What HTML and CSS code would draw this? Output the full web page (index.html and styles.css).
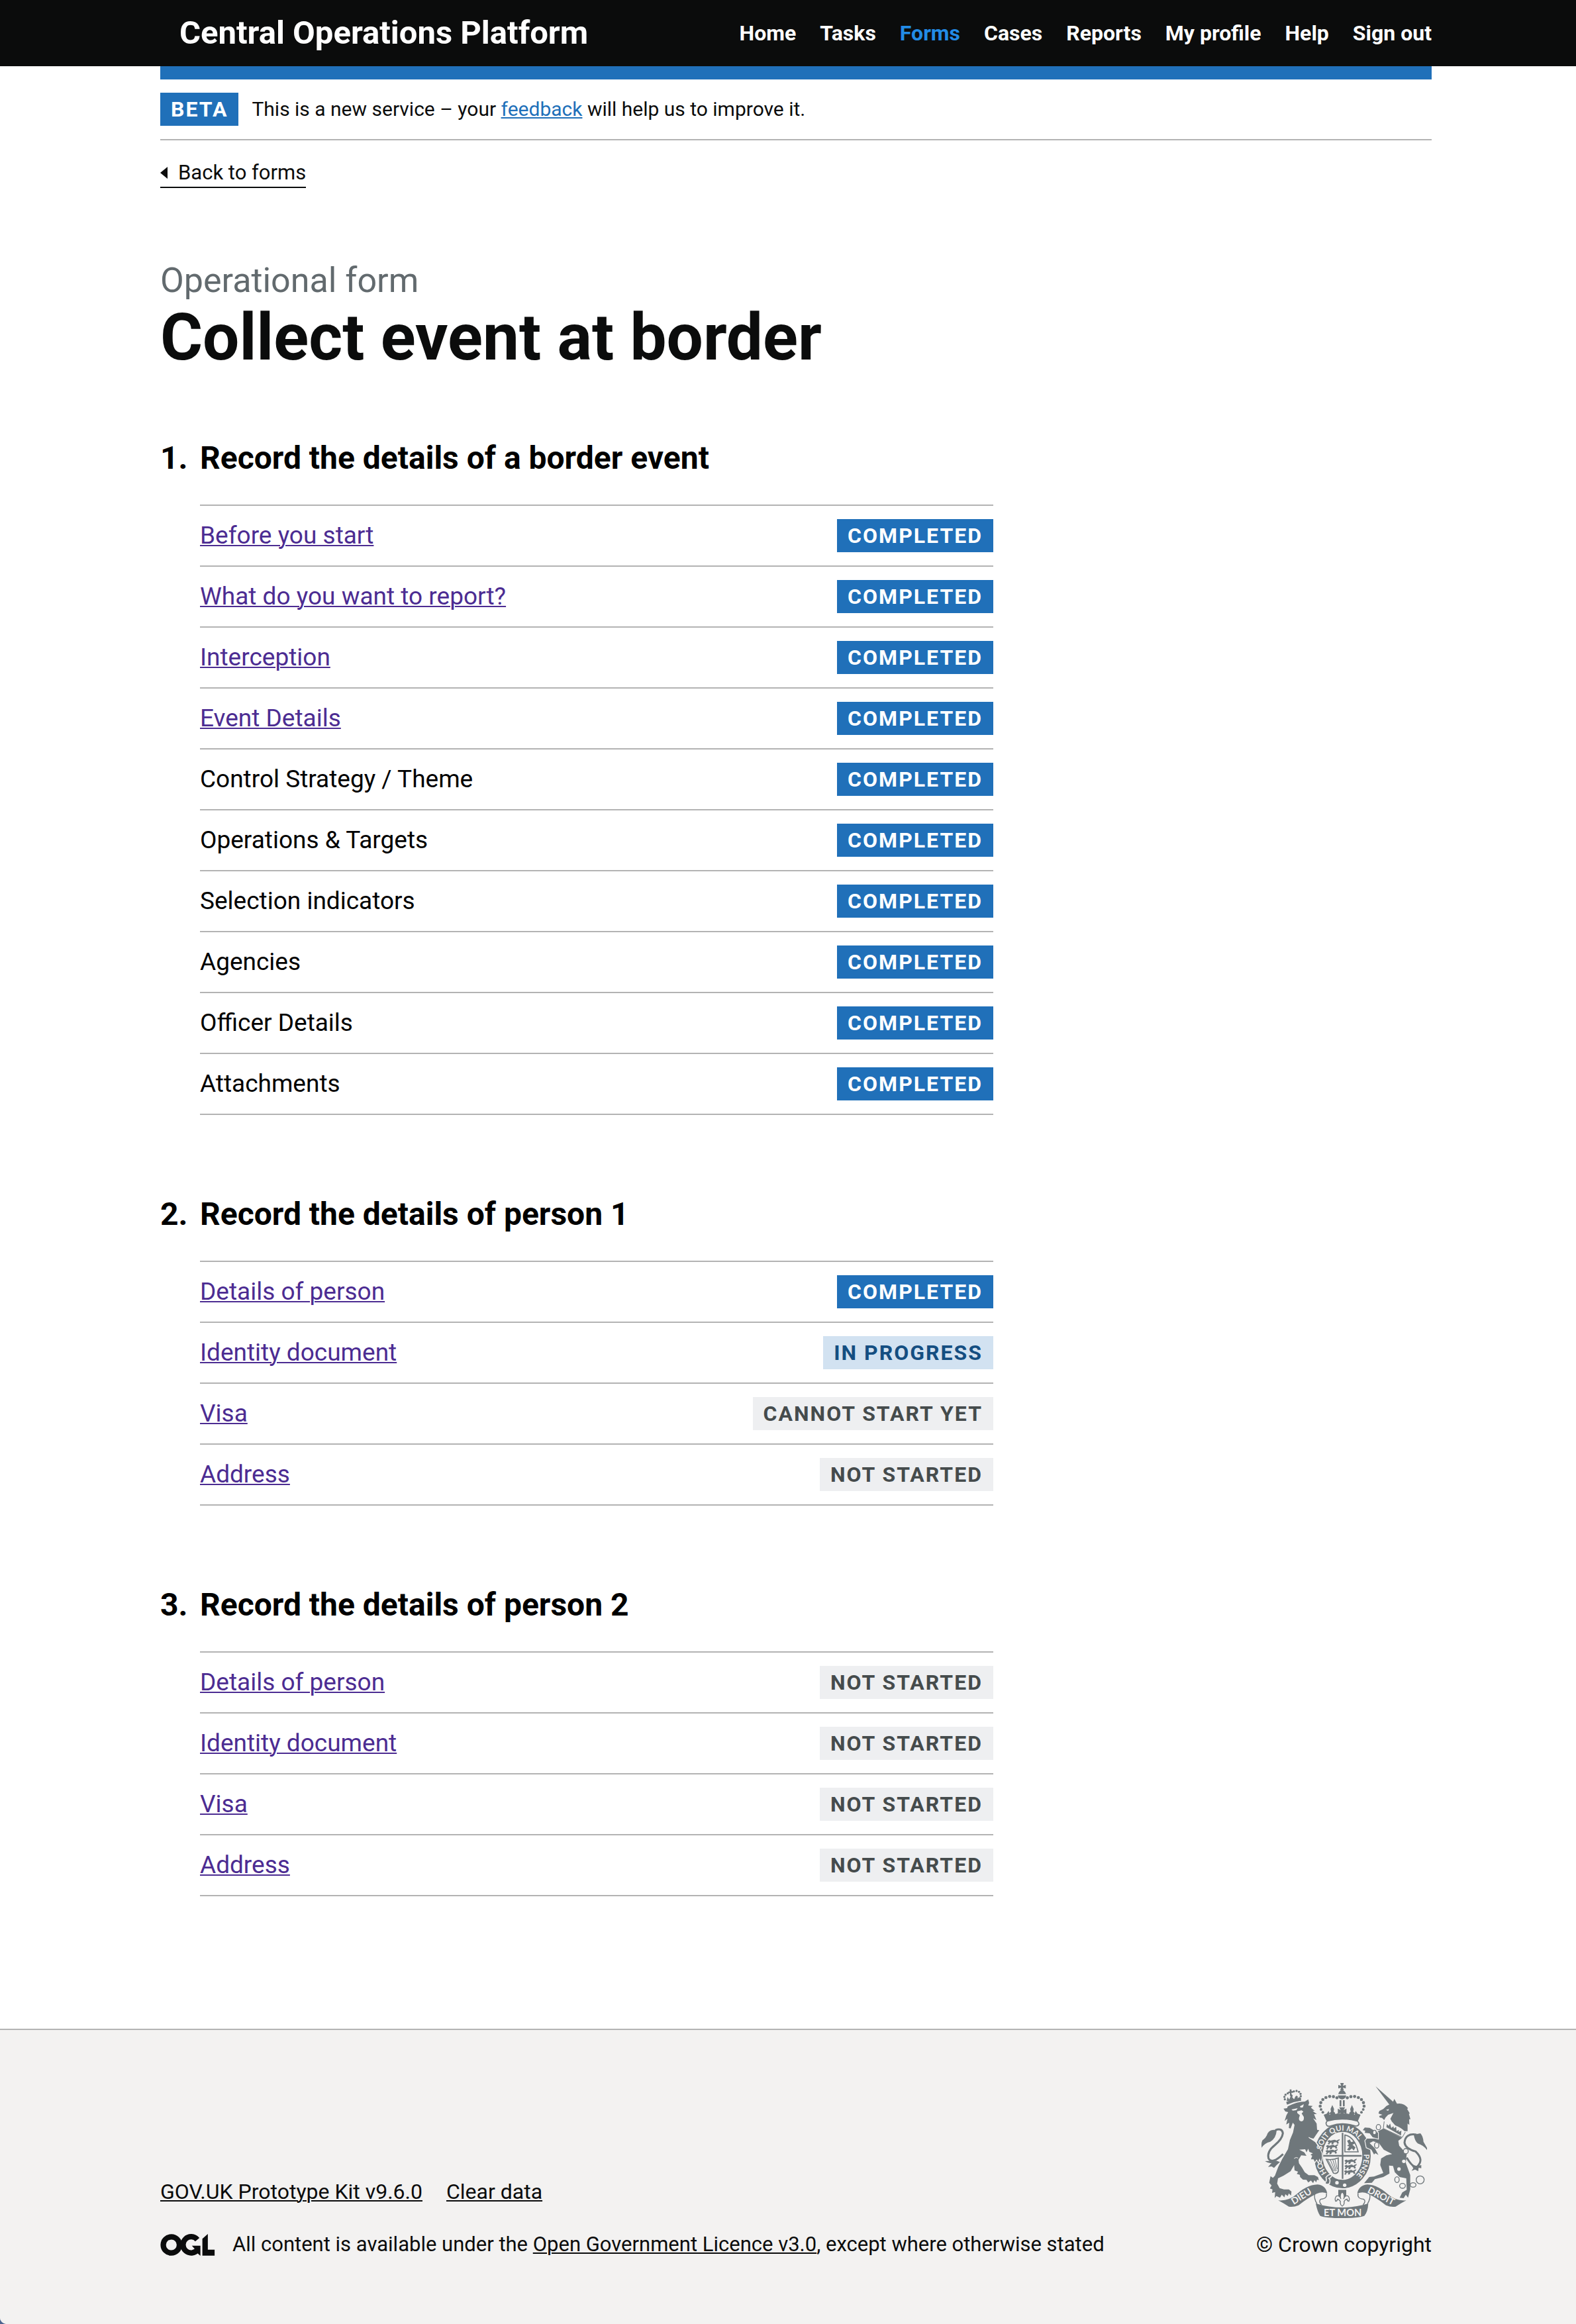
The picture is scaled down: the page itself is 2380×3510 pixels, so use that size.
FILE: index.html
```html
<!DOCTYPE html>
<html lang="en">
<head>
<meta charset="utf-8">
<meta name="viewport" content="width=device-width, initial-scale=1">
<title>Collect event at border – Central Operations Platform</title>
<link rel="stylesheet" href="styles.css">
</head>
<body>
<header class="header">
  <div class="container header-inner">
    <a class="service-name" href="#">Central Operations Platform</a>
    <nav class="nav" aria-label="Main">
      <a href="#">Home</a>
      <a href="#">Tasks</a>
      <a href="#" class="active" aria-current="page">Forms</a>
      <a href="#">Cases</a>
      <a href="#">Reports</a>
      <a href="#">My profile</a>
      <a href="#">Help</a>
      <a href="#">Sign out</a>
    </nav>
  </div>
</header>

<div class="container page">
  <div class="phase-banner">
    <strong class="tag">Beta</strong>
    <span class="phase-text">This is a new service – your <a href="#">feedback</a> will help us to improve it.</span>
  </div>
  <a class="back-link" href="#">
    <svg class="back-arrow" viewBox="0 0 11 18" aria-hidden="true"><path d="M0 9 11 0v18z"/></svg>
    Back to forms
  </a>

  <main>
    <p class="caption">Operational form</p>
    <h1 class="title">Collect event at border</h1>

    <section class="task-section">
      <h2 class="task-heading"><span class="number">1.</span>Record the details of a border event</h2>
      <ul class="task-list">
        <li><a href="#">Before you start</a><strong class="tag">Completed</strong></li>
        <li><a href="#">What do you want to report?</a><strong class="tag">Completed</strong></li>
        <li><a href="#">Interception</a><strong class="tag">Completed</strong></li>
        <li><a href="#">Event Details</a><strong class="tag">Completed</strong></li>
        <li><span>Control Strategy / Theme</span><strong class="tag">Completed</strong></li>
        <li><span>Operations &amp; Targets</span><strong class="tag">Completed</strong></li>
        <li><span>Selection indicators</span><strong class="tag">Completed</strong></li>
        <li><span>Agencies</span><strong class="tag">Completed</strong></li>
        <li><span>Officer Details</span><strong class="tag">Completed</strong></li>
        <li><span>Attachments</span><strong class="tag">Completed</strong></li>
      </ul>
    </section>

    <section class="task-section">
      <h2 class="task-heading"><span class="number">2.</span>Record the details of person 1</h2>
      <ul class="task-list">
        <li><a href="#">Details of person</a><strong class="tag">Completed</strong></li>
        <li><a href="#">Identity document</a><strong class="tag tag-progress">In progress</strong></li>
        <li><a href="#">Visa</a><strong class="tag tag-grey">Cannot start yet</strong></li>
        <li><a href="#">Address</a><strong class="tag tag-grey">Not started</strong></li>
      </ul>
    </section>

    <section class="task-section">
      <h2 class="task-heading"><span class="number">3.</span>Record the details of person 2</h2>
      <ul class="task-list">
        <li><a href="#">Details of person</a><strong class="tag tag-grey">Not started</strong></li>
        <li><a href="#">Identity document</a><strong class="tag tag-grey">Not started</strong></li>
        <li><a href="#">Visa</a><strong class="tag tag-grey">Not started</strong></li>
        <li><a href="#">Address</a><strong class="tag tag-grey">Not started</strong></li>
      </ul>
    </section>
  </main>
</div>

<footer class="footer">
  <div class="container footer-inner">
    <div class="footer-meta">
      <div class="footer-links">
        <a href="#">GOV.UK Prototype Kit v9.6.0</a>
        <a href="#">Clear data</a>
      </div>
      <div class="licence">
        <svg class="ogl" viewBox="35 60 248 100" role="img" aria-label="Open Government Licence">
          <circle cx="84" cy="110" r="37" fill="none" stroke="#0b0c0c" stroke-width="25"/>
          <path d="M203 86A37 37 0 1 0 204 132" fill="none" stroke="#0b0c0c" stroke-width="25"/>
          <path d="M178 114H217V160L203 148 192 130z" fill="#0b0c0c"/>
          <path d="M226 82 251 60V132H282V159H226z" fill="#0b0c0c"/>
        </svg>
        <span>All content is available under the <a href="#">Open Government Licence v3.0</a>, except where otherwise stated</span>
      </div>
    </div>
    <a class="copyright" href="#">
      <svg class="crest" viewBox="138 78 750 612" aria-hidden="true">
        <defs>
          <path id="garter-top" d="M408 408A97 114 0 0 1 602 408"/>
          <path id="garter-left" d="M448 500A97 114 0 0 1 409 420"/>
          <path id="garter-right" d="M600 385A97 114 0 0 1 545 512"/>
          <g id="lions">
            <path d="M0 6q8-8 14-2l10-2q10-5 16 2l8-4 8-3-2 6-6 4 4 9-8 2-3-7-12 1-3 8-8 1 1-9-8 3-3 7-7-3 5-6z"/>
          </g>
          <g id="half-crown">
            <g>
              <circle cx="480" cy="145" r="7"/><circle cx="464" cy="140" r="7"/><circle cx="447" cy="139" r="7"/><circle cx="430" cy="144" r="7"/><circle cx="416" cy="153" r="7"/><circle cx="407" cy="167" r="7"/><circle cx="404" cy="183" r="7"/><circle cx="408" cy="198" r="6"/><circle cx="416" cy="211" r="6"/>
            </g>
            <path d="M420 222l14-5 8-12 5 12-3 11q8 5 10-3l-7-7q0-8 6-10l-2-12 8-18 8 18-2 12q8 4 6 11l-7 7q5 7 12 0l6-12 4 14 18 0v22H432z"/>
          </g>
        </defs>
        <g fill="#6f777b">
          <!-- lion's crown -->
          <path d="M250 164Q282 148 316 148L318 158Q285 162 254 176z"/>
          <path d="M252 160l4-18 8 11 6-14-4-5 9-5 5 7-3 6 9 10 5-12 6-5 6 5-2 8 9-6 8 5-2 5-30 4z"/>
          <circle cx="244" cy="152" r="5"/><circle cx="242" cy="141" r="5"/><circle cx="247" cy="131" r="5"/><circle cx="257" cy="125" r="5"/><circle cx="285" cy="116" r="5"/><circle cx="297" cy="114" r="5"/><circle cx="308" cy="118" r="5"/><circle cx="315" cy="127" r="5"/><circle cx="316" cy="138" r="5"/>
          <path d="M266 107h8v8h8v7h-8v12h-7v-10h-8v-7h7z"/>
          <!-- garter -->
          <ellipse cx="505" cy="408" rx="109" ry="128" fill="none" stroke="#6f777b" stroke-width="38"/>
          <path d="M502 304h7v208h-7zM418 404h174v8H418z"/>
          <use href="#lions" x="437" y="335"/><use href="#lions" x="430" y="358"/><use href="#lions" x="428" y="380"/>
          <use href="#lions" x="514" y="424"/><use href="#lions" x="514" y="448"/><use href="#lions" x="512" y="472"/>
          <path d="M516 314q44 8 60 76h-60z" fill="none" stroke="#6f777b" stroke-width="5"/>
          <path d="M526 340l12-6 6 12 14-4 4 10-12 6 14 12-8 14-8-10-12 10-10-4 10-14-10-4 8-6z"/>
          <path d="M432 424q30 4 54-6v60q-6 14-22 8l-8-16z" fill="none" stroke="#6f777b" stroke-width="5"/>
          <path d="M440 428l26 50M450 426l22 52M461 425l16 52M471 424l10 44" stroke="#6f777b" stroke-width="3"/>
          <!-- lion -->
          <path class="beast" d="M257 184Q300 162 335 162L350 152 354 168 350 180 370 182 362 190 379 204 370 205 389 219 376 219 387 246 372 238 388 262 390 290 400 292 386 312 374 330 352 326 382 346 399 372 411 396 412 418 408 436 400 420 396 438 388 424 380 436 374 424 362 424 368 408 360 403 371 397 355 390 350 376 342 392 336 378 309 380 332 392 342 408 318 406 306 426 308 442 322 462 334 482 352 496 378 496 394 504 398 518 390 516 386 528 378 518 372 532 362 520 350 529 342 517 326 516 313 504 312 494 298 490 304 480 288 474 286 450 270 478 238 498 213 510 209 534 220 554 240 560 262 560 274 570 272 588 262 578 257 590 246 582 242 596 230 584 222 598 206 590 198 599 200 572 186 576 188 560 176 556 184 542 173 530 179 500 190 508 199 498 214 458 232 422 258 378 267 336 281 302 288 268 280 258 270 284 262 282 264 258 250 266 256 240 243 250 251 224 259 210 246 207 238 194 254 192z"/>
          <path d="M192 290Q168 292 162 316 156 330 142 338 136 350 139 371 152 350 178 344 204 330 207 292z"/>
          <path d="M200 292Q232 280 235 306 232 332 198 360 162 388 170 420 186 448 236 400" fill="none" stroke="#6f777b" stroke-width="9"/>
          <path d="M154 432Q172 444 184 440L168 458 184 456 195 463Q206 450 222 436L204 430z"/>
          <!-- unicorn -->
          <path class="beast" d="M690 284Q735 302 776 326L758 340 762 362 796 400 792 440 812 495 812 560 802 598 792 584 782 600 764 598 776 574 796 562 794 510 764 504 742 482 734 454 716 452 718 488 690 504 652 514 638 530 603 532 626 504 648 502 690 486 676 450 680 420 704 406 730 400 692 380 670 350 644 342 628 350 652 374 668 404 654 396 648 402 636 380 614 370 608 340 616 330 650 330 666 312 660 300z"/>
          <path class="beast" d="M666 304Q648 292 628 281L606 280 597 292 608 294 606 304 628 306 642 324 666 330z"/>
          <path d="M655 93 736 164 722 182z"/>
          <path d="M704 182L732 168 740 150 752 172Q782 166 802 192L798 196 810 216 806 218 813 242 807 242 808 268 800 262 800 296 786 296Q770 280 744 270L728 252 722 240 736 214 712 222Q698 234 694 246L684 236 674 235 671 228 686 222 668 216 672 205 690 196z"/>
          <path d="M828 312L858 306Q870 318 872 344L888 372V382Q872 360 846 352 832 340 828 312z"/>
          <path d="M840 312Q790 304 786 348 790 376 836 388 876 426 844 456 826 466 796 416" fill="none" stroke="#6f777b" stroke-width="9"/>
          <path d="M814 444L834 456 862 450 862 464 850 462 848 478 834 470 818 476 826 464z"/>
          <!-- crown -->
          <path d="M495 78h16l-4 13 13-4v16l-13-4 4 12h-16l4-12-13 4V87l13 4zM486 128q4-17 17-17t18 17zM484 134h38q-3 16-19 18-16-2-19-18zM492 156h8v28h-8zM507 156h8v28h-8zM490 188h27l-7 13 13-7v26l-13-7 6 13h-26l7-13-13 7v-26l13 7z"/>
          <use href="#half-crown"/>
          <use href="#half-crown" transform="matrix(-1 0 0 1 1007 0)"/>
          <path d="M428 226Q503 206 580 226L574 250Q503 230 434 250z"/>
          <path d="M436 250Q428 258 432 266 436 278 452 272 505 254 560 272 576 276 580 264 580 256 572 250 503 232 436 250z" fill="#f3f2f1" stroke="#6f777b" stroke-width="5"/>
          <!-- fleur-de-lis pendant -->
          <path d="M486 562h36v40h-36z"/>
          <path d="M504 570q-14 16-6 34-6-18-20-14-10 8-4 24 8 0 8-10 10 2 14 12-4 12 8 20 12-8 8-20 4-10 14-12 0 10 8 10 6-16-4-24-14-4-20 14 8-18-6-34z" fill="#f3f2f1" stroke="#6f777b" stroke-width="4"/>
          <!-- ribbon -->
          <path d="M214 610Q262 614 300 580 344 540 392 538 430 542 436 578 412 568 388 580 350 598 306 632 282 642 262 638 240 624 214 610z"/>
          <path d="M794 610Q746 614 708 580 664 540 618 538 578 542 572 578 598 568 620 580 658 598 702 632 726 642 746 638 768 624 794 610z"/>
          <path d="M384 624Q505 660 622 624 620 662 604 680 580 690 505 690 428 690 404 680 392 664 384 624z"/>
          <path d="M380 580Q374 600 390 626M432 578Q438 602 408 604 394 612 410 630" fill="none" stroke="#6f777b" stroke-width="4"/>
          <path d="M628 580Q634 600 618 626M576 578Q570 602 600 604 614 612 598 630" fill="none" stroke="#6f777b" stroke-width="4"/>
        </g>
        <!-- pale details cut over the solid shapes -->
        <g fill="#f3f2f1">
          <path d="M274 198l28-6-6 9-16 2zM312 184l18-10-4 14-10 2zM300 206l20-4 8 6-8 8 10 16q2 18-10 20-14-2-12-16l4-12-12-10z"/>
          <path d="M352 324Q384 340 400 366" fill="none" stroke="#f3f2f1" stroke-width="4"/>
          <path d="M286 420Q294 412 304 418" fill="none" stroke="#f3f2f1" stroke-width="3"/>
          <path d="M702 200l14-4-4 8zM694 250L706 254 796 306 776 326 690 284z"/>
          <circle cx="783" cy="433" r="8"/><circle cx="761" cy="468" r="8"/>
          <circle cx="480" cy="530" r="8"/><circle cx="515" cy="541" r="8"/>
        </g>
        <g fill="#6f777b">
          <path d="M704 278l2-14 8 8 7-10 5 20 10-8 2 10 10-8 2 20 10-6 0 10 12-6-2 22z"/>
        </g>
        <path d="M694 252L690 284 776 324 790 300" fill="none" stroke="#6f777b" stroke-width="3"/>
        <g fill="none" stroke="#6f777b" stroke-width="4">
          <ellipse cx="668" cy="278" rx="10" ry="12"/><ellipse cx="650" cy="302" rx="8" ry="10" fill="#f3f2f1"/><ellipse cx="660" cy="360" rx="10" ry="13" fill="#f3f2f1"/><ellipse cx="792" cy="387" rx="11" ry="12" fill="#f3f2f1"/>
          <ellipse cx="752" cy="516" rx="10" ry="13"/><ellipse cx="777" cy="544" rx="13" ry="11"/><ellipse cx="825" cy="540" rx="13" ry="10"/><circle cx="857" cy="517" r="18"/>
        </g>
        <path d="M430 506q14-18 28-12-4 12-14 16 8 6 2 24-16 8-20-4 10-8 4-24z" fill="#6f777b" stroke="#f3f2f1" stroke-width="5"/>
        <g class="crest-text">
          <text font-size="34"><textPath href="#garter-top" startOffset="26">SOIT QUI MAL</textPath></text>
          <text font-size="34"><textPath href="#garter-left" startOffset="20">HO</textPath></text>
          <text font-size="34"><textPath href="#garter-right" startOffset="16">PENSE</textPath></text>
          <text font-size="42" transform="translate(284 630) rotate(-32)">DIEU</text>
          <text font-size="42" transform="translate(616 573) rotate(27)">DROIT</text>
          <text font-size="44" x="420" y="681">ET MON</text>
        </g>
      </svg>
      <span>© Crown copyright</span>
    </a>
  </div>
</footer>
</body>
</html>
```
FILE: styles.css
```css
:root {
  --ink: #0b0c0c;
  --blue: #2070b9;
  --line: #b3b3b3;
  --paper: #f3f2f1;
}

* { box-sizing: border-box; }

html { background: #4c6490; }

body {
  margin: 0;
  min-height: 100vh;
  display: flex;
  flex-direction: column;
  overflow: hidden;
  border-bottom-left-radius: 10px;
  background: #fff;
  color: var(--ink);
  font-family: Roboto, "Liberation Sans", sans-serif;
  font-size: 31px;
  line-height: 40px;
}

a {
  color: inherit;
  text-decoration-thickness: 2px;
  text-underline-offset: 2px;
}

.container { margin: 0 218px 0 242px; }

/* Header */
.header { background: var(--ink); color: #fff; font-weight: 700; }
.header-inner {
  display: flex;
  justify-content: space-between;
  align-items: center;
  min-height: 100px;
  padding-left: 29px;
}
.header a { text-decoration: none; }
.service-name { font-size: 49px; line-height: 60px; }
.nav { display: flex; gap: 36px; font-size: 32px; }
.nav .active { color: #228be6; }

/* Phase banner */
.page { padding-bottom: 200px; }
.phase-banner {
  display: flex;
  align-items: center;
  gap: 20px;
  padding: 20px 0;
  border-top: 20px solid var(--blue);
  border-bottom: 2px solid var(--line);
}
.phase-text { font-size: 30px; line-height: 50px; }
.phase-text a { color: var(--blue); }

.tag {
  padding: 0 16px;
  background: var(--blue);
  color: #fff;
  font-size: 32px;
  font-weight: 700;
  line-height: 50px;
  letter-spacing: 2px;
  text-transform: uppercase;
}
.tag-progress { background: #d2e2f1; color: #144e81; }
.tag-grey { background: #eeeff1; color: #454b4c; }

.back-link {
  display: inline-flex;
  align-items: center;
  gap: 16px;
  margin-top: 30px;
  padding-bottom: 2px;
  border-bottom: 2px solid var(--ink);
  line-height: 38px;
  text-decoration: none;
}
.back-arrow { width: 11px; height: 18px; fill: var(--ink); }

/* Headings */
.caption {
  margin: 110px 0 0;
  color: #626a6e;
  font-size: 52px;
  line-height: 60px;
}
.title { margin: 0 0 96px; font-size: 98px; line-height: 112px; }

/* Task list */
.task-section + .task-section { margin-top: 120px; }
.task-heading {
  display: flex;
  margin: 0 0 40px;
  color: #000;
  font-size: 48px;
  line-height: 60px;
}
.number { flex: 0 0 60px; }
.task-list {
  max-width: 1198px;
  margin: 0 0 0 60px;
  padding: 0;
  border-top: 2px solid var(--line);
  list-style: none;
  color: #000;
  font-size: 37px;
  line-height: 50px;
}
.task-list li {
  display: flex;
  justify-content: space-between;
  padding: 20px 0;
  border-bottom: 2px solid var(--line);
}
.task-list a { color: #4c2c92; }

/* Footer */
.footer {
  flex: 1;
  padding: 80px 0;
  border-top: 2px solid var(--line);
  background: var(--paper);
}
.footer-inner {
  display: flex;
  justify-content: space-between;
  align-items: flex-end;
}
.footer-meta { display: grid; gap: 40px; }
.footer-links { display: flex; gap: 36px; font-size: 32px; }
.licence { display: flex; align-items: center; gap: 26px; }
.ogl { width: 83px; height: 33px; }
.copyright {
  display: flex;
  flex-direction: column;
  align-items: center;
  gap: 20px;
  font-size: 32px;
  text-decoration: none;
}
.crest { width: 250px; height: 204px; }
.beast { stroke: var(--paper); stroke-width: 7px; paint-order: stroke; }
.crest-text {
  fill: var(--paper);
  font-family: Lato, sans-serif;
  font-weight: 700;
}
```
